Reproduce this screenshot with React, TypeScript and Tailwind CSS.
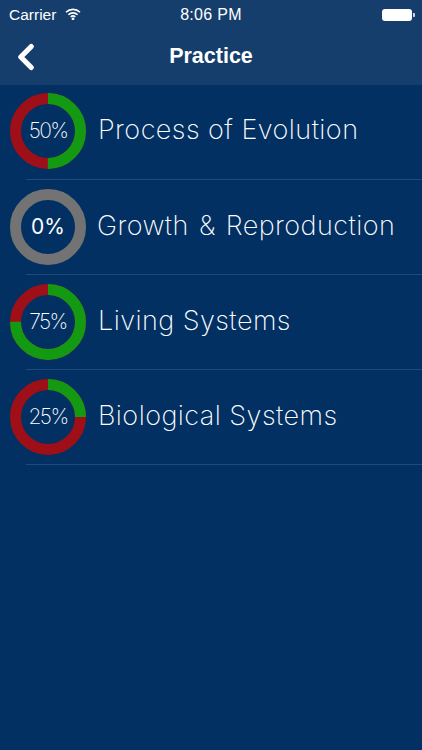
import { ChevronLeft } from "lucide-react";

const topics = [
  { name: "Process of Evolution", pct: 50, row: "h-[92px] mb-[2px]", label: "" },
  { name: "Growth & Reproduction", pct: 0, row: "h-[94px]", label: "-ml-[1px] [word-spacing:2px]" },
  { name: "Living Systems", pct: 75, row: "h-[94px]", label: "tracking-[0.3px]" },
  { name: "Biological Systems", pct: 25, row: "h-[94px]", label: "" },
];

function Donut({ pct }: { pct: number }) {
  const r = 32.5;
  const c = 2 * Math.PI * r;
  const green = (pct / 100) * c;
  const empty = pct === 0;
  return (
    <div className="relative h-[76px] w-[76px] shrink-0">
      <svg viewBox="0 0 76 76" className="h-full w-full">
        <circle cx="38" cy="38" r={r} fill="none" strokeWidth="11" stroke={empty ? "#737373" : "#9f0f17"} />
        {!empty && (
          <circle
            cx="38"
            cy="38"
            r={r}
            fill="none"
            strokeWidth="11"
            stroke="#139a12"
            strokeDasharray={`${green} ${c - green}`}
            transform="rotate(-90 38 38)"
          />
        )}
      </svg>
      <div
        className={`absolute inset-0 flex items-center justify-center text-white ${
          empty ? "text-[21px] font-normal" : "text-[21px] font-extralight tracking-[-1.6px]"
        }`}
      >
        {pct}%
      </div>
    </div>
  );
}

export default function App() {
  return (
    <div className="flex h-[750px] w-[422px] flex-col overflow-hidden bg-[#023063] font-['Inter',sans-serif] text-white">
      {/* Status + nav bar */}
      <div className="h-[85px] bg-[#163e6c]">
        <div className="flex h-[29px] items-center justify-between pl-[9px] pr-[7px] text-[15.5px]">
          <div className="flex w-[140px] items-center gap-[9px] font-['Liberation_Sans',sans-serif]">
            Carrier
            <svg width="16" height="12" viewBox="0 0 16 12" fill="none" stroke="white" strokeWidth="1.6" className="-mt-[2px]">
              <path d="M1 4.2a10 10 0 0 1 14 0" />
              <path d="M3.4 6.7a6.6 6.6 0 0 1 9.2 0" />
              <path d="M5.7 9a3.3 3.3 0 0 1 4.6 0" />
              <circle cx="8" cy="10.8" r="0.6" fill="white" />
            </svg>
          </div>
          <div className="-ml-[2px] font-['Liberation_Sans',sans-serif] text-[16px] tracking-[0.3px]">8:06 PM</div>
          <div className="flex w-[140px] items-center justify-end">
            <div className="h-[12px] w-[30px] rounded-[3px] bg-white" />
            <div className="ml-[1px] h-[4px] w-[2px] rounded-r-[1px] bg-white/80" />
          </div>
        </div>
        <div className="relative flex h-[54px] items-center justify-center">
          <ChevronLeft className="absolute left-[5px] top-[7px]" size={42} strokeWidth={3} />
          <div className="font-['Liberation_Sans',sans-serif] text-[21.5px] font-bold">Practice</div>
        </div>
      </div>

      {/* Topic rows */}
      {topics.map((t) => (
        <div key={t.name}>
          <div className={`flex items-center gap-[12px] pl-[10px] ${t.row}`}>
            <Donut pct={t.pct} />
            <div className={`-mt-[1px] text-[27px] font-extralight tracking-[0.45px] ${t.label}`}>{t.name}</div>
          </div>
          <div className="ml-[26px] h-px bg-[#1f4a7c]" />
        </div>
      ))}
    </div>
  );
}
